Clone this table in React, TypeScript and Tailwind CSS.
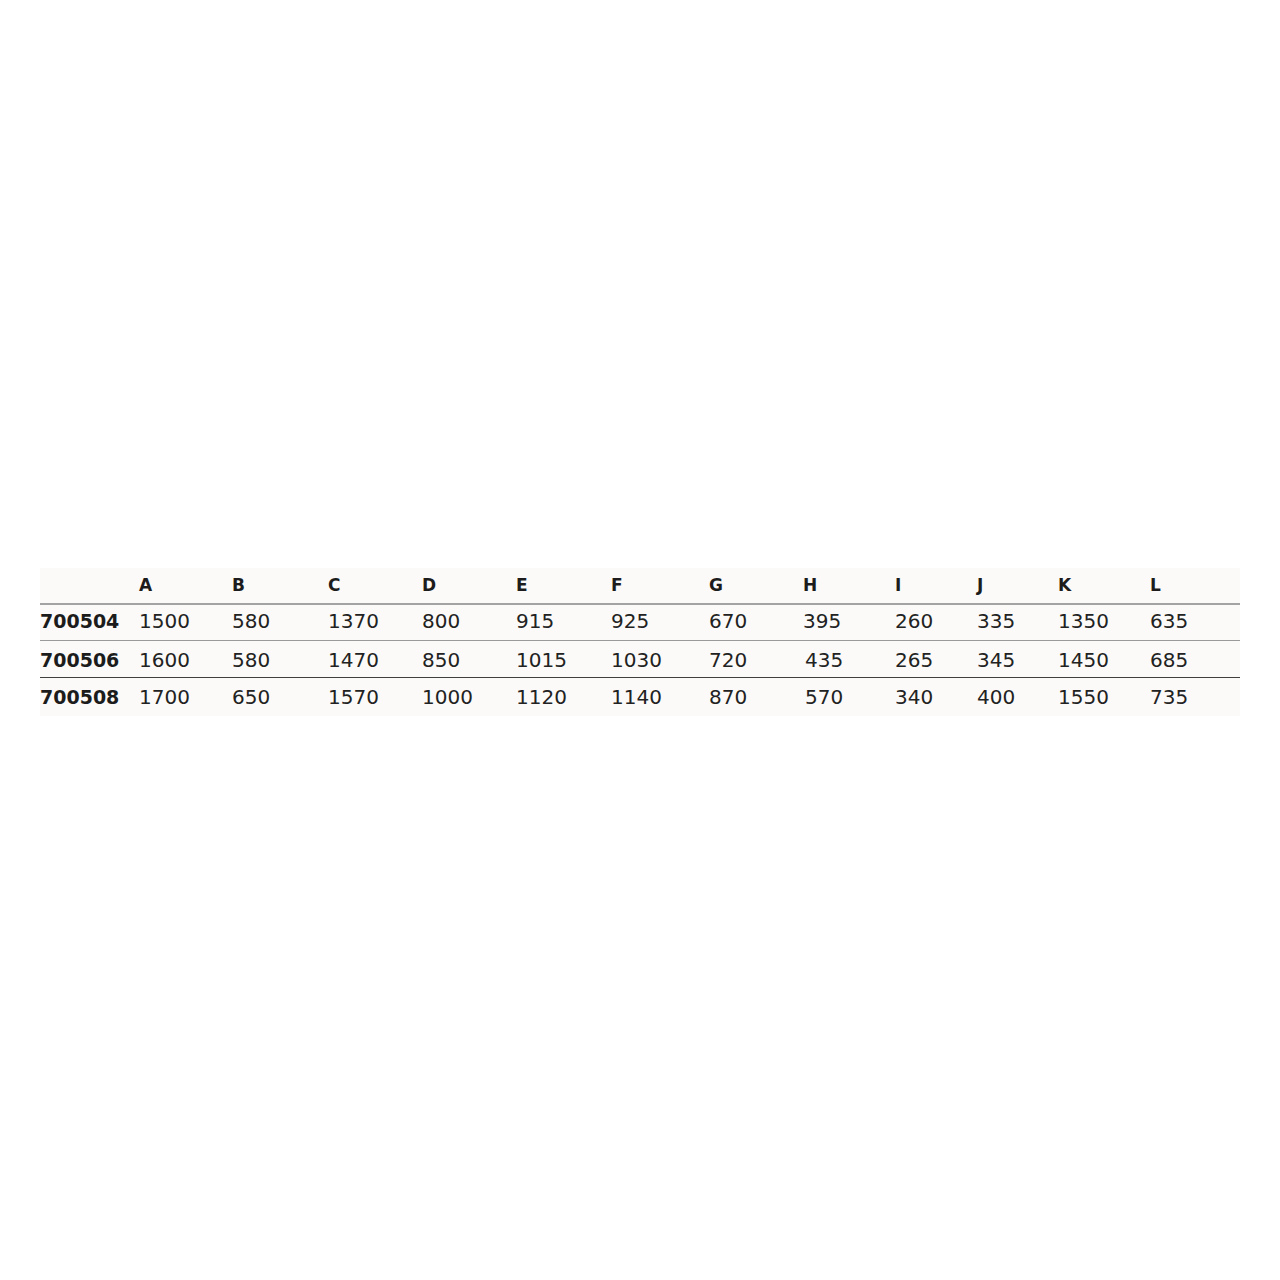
const headers = ['A', 'B', 'C', 'D', 'E', 'F', 'G', 'H', 'I', 'J', 'K', 'L']

const rows: { code: string; values: string[] }[] = [
	{ code: '700504', values: ['1500', '580', '1370', '800', '915', '925', '670', '395', '260', '335', '1350', '635'] },
	{ code: '700506', values: ['1600', '580', '1470', '850', '1015', '1030', '720', '435', '265', '345', '1450', '685'] },
	{ code: '700508', values: ['1700', '650', '1570', '1000', '1120', '1140', '870', '570', '340', '400', '1550', '735'] },
]

// column widths measured off the sheet
const cols = 'grid grid-cols-[99px_93px_96px_94px_94px_95px_98px_94px_92px_82px_81px_92px_90px]'

const rowStyles = [
	'h-[37px] border-t-2 border-[#a3a3a3] pb-[3px]',
	'h-[37px] border-t border-[#9a9a9a] pt-[2px]',
	'h-[39px] border-t border-[#3f3f3f]',
]

export default function App() {
	return (
		<div className="w-[1280px] h-[1280px] bg-white flex flex-col pt-[568px] pl-[40px]" style={{ fontFamily: '"DejaVu Sans", sans-serif' }}>
			<div className="w-[1200px] bg-[#fbfaf8] text-[#222]">
				<div className={`${cols} h-[35px] items-center text-[17px] font-bold text-[#1c1c1c]`}>
					<div></div>
					{headers.map((h) => (
						<div key={h}>{h}</div>
					))}
				</div>
				{rows.map((row, i) => (
					<div key={row.code} className={`${cols} ${rowStyles[i]} items-center text-[20px]`}>
						<div className="font-bold text-[19px] text-[#1c1c1c]">{row.code}</div>
						{row.values.map((v, j) => (
							<div key={j} className={j === 7 && i > 0 ? 'pl-[2px]' : ''}>
								{v}
							</div>
						))}
					</div>
				))}
			</div>
		</div>
	)
}
